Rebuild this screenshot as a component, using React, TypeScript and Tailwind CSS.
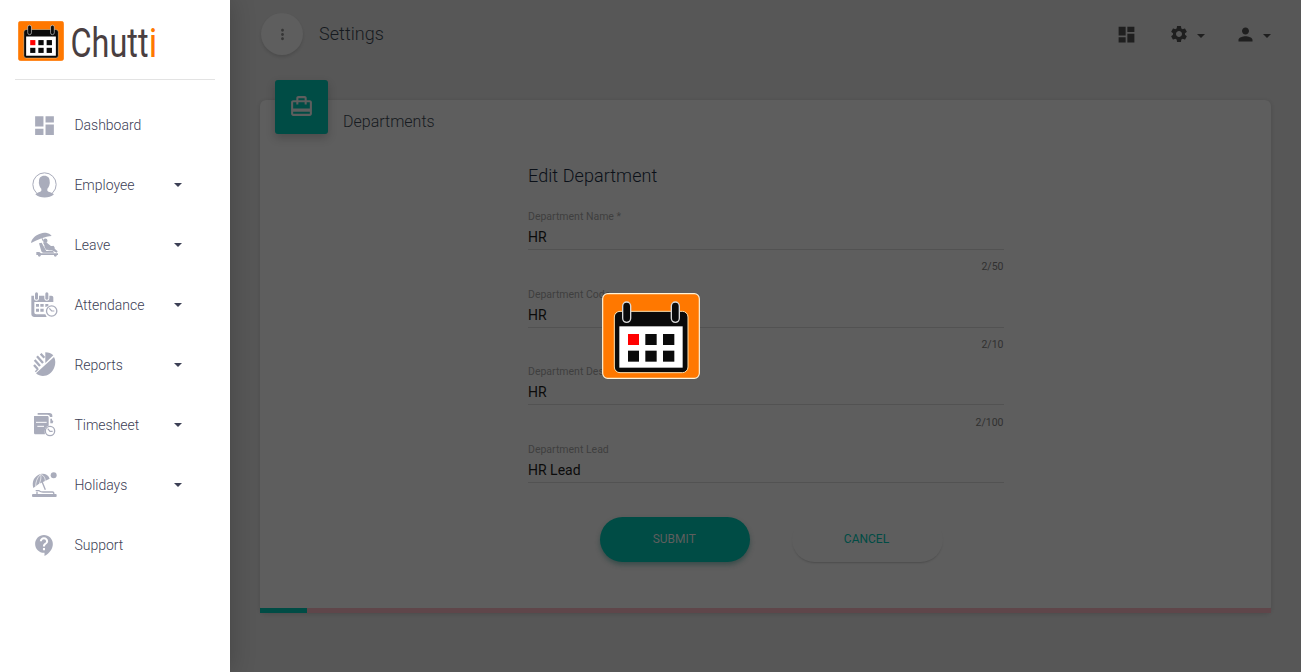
import type { ReactNode } from "react";
import {
  MdCardTravel,
  MdContactSupport,
  MdDashboard,
  MdMoreVert,
  MdPerson,
  MdSettings,
} from "react-icons/md";

function CalendarMark({ className, outline }: { className: string; outline: string }) {
  return (
    <svg className={className} viewBox="36 39 294 258" preserveAspectRatio="none">
      <rect x="38" y="41" width="290" height="254" rx="15" fill="#ff7800" stroke={outline} strokeWidth="3.500" />
      <rect x="73" y="94" width="221" height="184" rx="17" fill="#0a0a0a" stroke="#ffe2b0" strokeWidth="3" />
      <rect x="88" y="139" width="190" height="124" fill="#fff" />
      <rect x="98" y="66" width="24" height="61" rx="12" fill="#0a0a0a" stroke="#d9d9d9" strokeWidth="4" />
      <rect x="244" y="66" width="24" height="61" rx="12" fill="#0a0a0a" stroke="#d9d9d9" strokeWidth="4" />
      <rect x="114" y="162" width="33" height="33" fill="#f00" />
      <g fill="#0a0a0a">
        <rect x="166" y="162" width="34" height="33" />
        <rect x="219" y="162" width="34" height="33" />
        <rect x="114" y="212" width="33" height="33" />
        <rect x="166" y="212" width="34" height="33" />
        <rect x="219" y="212" width="34" height="33" />
      </g>
    </svg>
  );
}

function Caret({ className }: { className: string }) {
  return (
    <svg className={className} width="8" height="4" viewBox="0 0 8 4" fill="currentColor">
      <path d="M0 0h8L4 4z" />
    </svg>
  );
}

function EmployeeIcon() {
  return (
    <svg width="28" height="28" viewBox="30 213 84 84" fill="currentColor">
      <circle cx="73.500" cy="253.500" r="35" fill="none" stroke="currentColor" strokeWidth="3" />
      <path d="M73 227c11 0 16 7 16 16 0 4 1 6 0 8-1 7-4 12-7 15v6c3 5 14 4 20 11-14 13-42 13-56 0 6-7 15-6 18-11v-6c-3-3-6-8-7-15-1-2 0-5 0-8 0-9 5-16 16-16z" />
    </svg>
  );
}

function LeaveIcon() {
  return (
    <svg width="28" height="28" viewBox="30 33 84 84" fill="currentColor">
      <path d="M33 69c1-11 12-22 25-27 6-3 13-4 20-4 7 1 13 4 17 10-10 0-20 3-30 7-11 4-22 9-32 14z" />
      <path d="M65 52l5 12" stroke="currentColor" strokeWidth="3" />
      <circle cx="76" cy="62" r="6.500" />
      <path d="M57 70l8-2 14 25 20-1 3 6H70c-3 0-5-2-6-4z" />
      <path d="M69 68c7-3 13-1 15 3l9 7 9 1 2 5-13 3-14-3z" />
      <path d="M72 78l6 11 12 1-5-7z" />
      <path d="M88 80l12-3 5 10 8 7-3 4-14-7-11 0z" />
      <path d="M49 96h9l5 4h51v5H49z" />
      <circle cx="58" cy="106" r="4" />
      <circle cx="106" cy="106" r="4" />
    </svg>
  );
}

function AttendanceIcon() {
  return (
    <svg width="28" height="28" viewBox="30 213 84 84" fill="currentColor">
      <path d="M34 227h8v8c0 10 15 10 15 0v-8h16v8c0 10 15 10 15 0v-8h6c4 0 6 2 6 6v13H43v31c0 4 2 6 6 6h27l4 8H43c-6 0-9-4-9-9z" />
      <rect x="45" y="217" width="9" height="22" rx="4.500" />
      <rect x="76" y="217" width="9" height="22" rx="4.500" />
      <path d="M48 252h9v8h-9zM61 252h10v8h-10zM76 252h9v6l-9 3zM48 266h9v9h-9zM61 266h10v9h-10z" />
      <circle cx="95" cy="273" r="15.500" fill="#fff" stroke="currentColor" strokeWidth="4" />
      <path d="M88 265l7 8h8" fill="none" stroke="currentColor" strokeWidth="3.500" />
    </svg>
  );
}

function ReportsIcon() {
  return (
    <svg width="28" height="28" viewBox="30 33 84 84" fill="currentColor">
      <path d="M76 37c10 0 18 3 24 9L76 69z" />
      <path d="M102 51c5 8 5 21 1 31-9 26-38 34-55 18z" />
      <g fill="none" stroke="currentColor" strokeWidth="7">
        <path d="M62 41l11 12M51 49l18 20M44 60l16 18M42 75l11 12" />
      </g>
      <path d="M46 95l9-9" stroke="currentColor" strokeWidth="4" />
    </svg>
  );
}

function TimesheetIcon() {
  return (
    <svg width="28" height="28" viewBox="30 213 84 84" fill="currentColor">
      <path d="M53 219h35c6 0 9 3 9 8v4h-7c-1-5-3-7-8-7H53z" />
      <path d="M91 236h5v5l4 2-2 7h-7z" />
      <path d="M43 228h38c4 0 5 2 5 5v24c-9 3-14 11-11 26H47c-3 0-5-2-5-5v-49z" />
      <path d="M48 247h32M52 259h20" stroke="#fff" strokeWidth="3" />
      <circle cx="90" cy="273" r="14" fill="#fff" stroke="currentColor" strokeWidth="4" />
      <path d="M83 266l7 8h8" fill="none" stroke="currentColor" strokeWidth="3.500" />
    </svg>
  );
}

function HolidaysIcon() {
  return (
    <svg width="28" height="28" viewBox="30 33 84 84" fill="currentColor">
      <circle cx="101" cy="46" r="9" />
      <path d="M40 84c-6-20 4-37 22-42 12-3 23 3 27 14l-20 10-14 7z" />
      <path d="M47 79c0-13 4-25 14-35M58 72c4-11 6-20 4-29M76 64c0-10-4-16-12-21" fill="none" stroke="#fff" strokeWidth="2" />
      <path d="M65 62l11 27" stroke="currentColor" strokeWidth="4" />
      <path d="M47 92h10c4 3 7 4 12 4h28c4 0 5 3 4 7" fill="none" stroke="currentColor" strokeWidth="4" />
      <path d="M51 95v8" stroke="currentColor" strokeWidth="4" />
      <rect x="36" y="102" width="74" height="9" rx="3" />
    </svg>
  );
}

const navItems: { label: string; icon: ReactNode; expandable: boolean }[] = [
  { label: "Dashboard", icon: <MdDashboard size={25} />, expandable: false },
  { label: "Employee", icon: <EmployeeIcon />, expandable: true },
  { label: "Leave", icon: <LeaveIcon />, expandable: true },
  { label: "Attendance", icon: <AttendanceIcon />, expandable: true },
  { label: "Reports", icon: <ReportsIcon />, expandable: true },
  { label: "Timesheet", icon: <TimesheetIcon />, expandable: true },
  { label: "Holidays", icon: <HolidaysIcon />, expandable: true },
  { label: "Support", icon: <MdContactSupport size={25} />, expandable: false },
];

function Sidebar() {
  return (
    <aside className="z-10 h-full w-[230px] shrink-0 bg-white px-[15px] shadow-[0_0_24px_rgba(0,0,0,0.22)]">
      <div className="flex h-20 items-start border-b border-[#e3e3e3] pt-[21px] pl-[3px]">
        <CalendarMark className="h-10 w-[46px]" outline="#ff7800" />
        <svg className="-mt-[14px] ml-[4px] h-[64px] w-[96px]" viewBox="-3 0 96 64">
          <g className="font-[Roboto,sans-serif] text-[41px]">
            <text x="-0.500" y="50" textLength="78" lengthAdjust="spacingAndGlyphs" fill="#4a3f41">
              Chutt
            </text>
            <text x="77.800" y="50" textLength="8.500" lengthAdjust="spacingAndGlyphs" fill="#ff7800">
              i
            </text>
          </g>
        </svg>
      </div>
      <nav className="pt-[15px]">
        {navItems.map((item) => (
          <div key={item.label} className="flex h-[60px] items-center pl-[15px] text-[#3c4055]">
            <span className="flex w-7 shrink-0 justify-center text-[#a9acbb]">{item.icon}</span>
            <span className="ml-[16.400px] w-[99.600px] text-sm font-light">{item.label}</span>
            {item.expandable && <Caret className="text-[#3c4055]" />}
          </div>
        ))}
      </nav>
    </aside>
  );
}

function Header() {
  return (
    <header className="flex h-[68px] items-center pr-[30px] pl-[31px]">
      <div className="flex size-[42px] items-center justify-center rounded-full bg-[#5e5e5e] text-[#363636] shadow-[0_2px_3px_rgba(0,0,0,0.12)]">
        <MdMoreVert size={17} />
      </div>
      <h1 className="ml-4 text-lg font-light tracking-[0.05px] text-[#161a20]">Settings</h1>
      <div className="ml-auto flex items-center text-[#1f1f1f]">
        <MdDashboard size={21} />
        <MdSettings size={20} className="ml-8" />
        <Caret className="mt-[3px] ml-2" />
        <MdPerson size={21} className="ml-[30px]" />
        <Caret className="mt-[3px] ml-[7px]" />
      </div>
    </header>
  );
}

function Field({ label, value, count }: { label: string; value: string; count?: string }) {
  return (
    <div className="h-[77.600px]">
      <div className="text-[10.500px] leading-3 text-[#3f3f3f]">{label}</div>
      <div className="flex h-[27px] items-center border-b border-[#525252] pt-[1.900px] text-sm text-[#0b0b0b]">
        {value}
      </div>
      {count && (
        <div className="mt-[10.400px] text-right text-[10.500px] leading-[14px] text-[#303030]">{count}</div>
      )}
    </div>
  );
}

function DepartmentCard() {
  return (
    <section className="mx-[30px] mt-8 flex h-[513px] flex-col rounded-md bg-[#5e5e5e] shadow-[0_1px_4px_rgba(0,0,0,0.14)]">
      <div className="flex h-[34px] px-[15px]">
        <div className="-mt-5 flex h-[54px] w-[53px] items-center justify-center rounded-[3px] bg-[#004c45] text-[#5e5e5e] shadow-[0_4px_10px_rgba(0,0,0,0.2)]">
          <MdCardTravel size={25} className="-mt-[2px]" />
        </div>
        <h2 className="mt-[10px] ml-[15px] text-base font-light text-[#161a20]">Departments</h2>
      </div>
      <div className="ml-[268px] w-[475.500px] pt-7">
        <h3 className="mb-[21px] text-lg leading-7 font-light tracking-[0.070px] text-[#0b1018]">Edit Department</h3>
        <Field label="Department Name *" value="HR" count="2/50" />
        <Field label="Department Code" value="HR" count="2/10" />
        <Field label="Department Description" value="HR" count="2/100" />
        <Field label="Department Lead" value="HR Lead" />
      </div>
      <div className="-mt-[4px] ml-[340px] flex gap-[42px]">
        <div className="flex h-[45px] w-[150px] items-center justify-center rounded-full bg-[#004c45] pr-[1.500px] pb-[2px] text-xs text-[#5e5e5e] shadow-[0_3px_5px_rgba(0,50,45,0.4)]">
          SUBMIT
        </div>
        <div className="flex h-[45px] w-[151px] items-center justify-center rounded-full pr-[2px] pb-[2px] text-xs text-[#004c45] shadow-[0_2px_2px_-1px_rgba(0,0,0,0.2)]">
          CANCEL
        </div>
      </div>
      <div className="mt-auto h-[5px] bg-[#5f464a]">
        <div className="h-full w-[47px] bg-[#004c45]" />
      </div>
    </section>
  );
}

export default function App() {
  return (
    <div className="relative flex h-[672px] w-full overflow-hidden bg-[#575757] font-[Roboto,sans-serif]">
      <Sidebar />
      <main className="min-w-0 flex-1">
        <Header />
        <DepartmentCard />
      </main>
      <CalendarMark className="absolute top-[293px] left-[602px] z-20 h-[86px] w-[98px]" outline="#fff3d8" />
    </div>
  );
}
